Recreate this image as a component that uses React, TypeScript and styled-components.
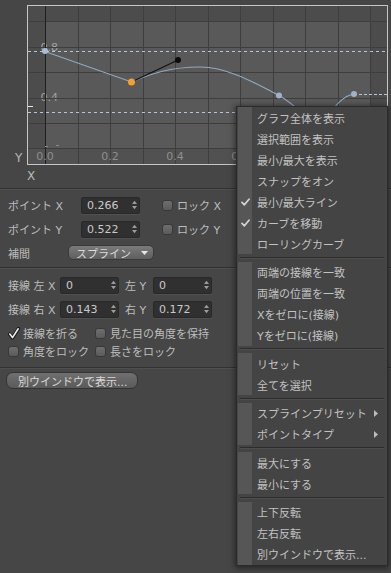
import React from 'react';
import styled, { createGlobalStyle } from 'styled-components';

const UI_FONT = `"DejaVu Sans", "Noto Sans CJK JP", sans-serif`;

const GlobalStyle = createGlobalStyle`
  body {
    margin: 0;
    background: #464646;
  }
`;

const Page = styled.div`
  position: relative;
  width: 391px;
  height: 573px;
  overflow: hidden;
  background: #464646;
  color: #bdbdbd;
  font-family: ${UI_FONT};
  font-size: 11px;
`;

const GraphRow = styled.div`
  display: flex;
  align-items: flex-end;
  padding-top: 5px;
`;

const AxisName = styled.div<{ $pad: number }>`
  flex: none;
  padding-left: ${p => p.$pad}px;
  font-size: 12px;
  line-height: 12px;
  color: #b8b8b8;
`;

const YSlot = styled(AxisName)`
  width: 27px;
  box-sizing: border-box;
  margin-bottom: 1px;
`;

const XRow = styled.div`
  height: 23px;
  box-sizing: border-box;
  padding-top: 5px;
`;

const GraphFrame = styled.div`
  flex: none;
  width: 361px;
  height: 160px;
  box-sizing: border-box;
  border: 1px solid #c6c6c6;
  background: #4c4c4c;

  svg {
    display: block;
  }
`;

const Divider = styled.div`
  height: 0;
  border-top: 1px solid #323232;
  border-bottom: 1px solid #4f4f4f;
`;

const Section = styled.div<{ $top: number; $bottom: number }>`
  padding: ${p => p.$top}px 0 ${p => p.$bottom}px 8px;
`;

const Row = styled.div<{ $h: number; $mt?: number }>`
  display: flex;
  align-items: center;
  height: ${p => p.$h}px;
  margin-top: ${p => p.$mt ?? 0}px;
  white-space: nowrap;
`;

const Label = styled.span<{ $w?: number; $ml?: number }>`
  flex: none;
  width: ${p => (p.$w ? `${p.$w}px` : 'auto')};
  margin-left: ${p => p.$ml ?? 0}px;
`;

const Field = styled.div`
  flex: none;
  width: 59px;
  height: 17px;
  box-sizing: border-box;
  display: flex;
  align-items: center;
  justify-content: space-between;
  padding: 0 2px 0 5px;
  background: #303030;
  border: 1px solid #282828;
  border-radius: 2px;
  box-shadow: 0 1px 0 #515151;
  color: #cacaca;
`;

const Box = styled.span<{ $ml?: number }>`
  flex: none;
  width: 11px;
  height: 11px;
  box-sizing: border-box;
  margin-left: ${p => p.$ml ?? 0}px;
  margin-right: 4px;
  border: 1px solid #383838;
  border-radius: 3px;
  background: linear-gradient(#6e6e6e, #5b5b5b);
`;

const CheckCell = styled.span<{ $w?: number }>`
  flex: none;
  display: flex;
  align-items: center;
  width: ${p => (p.$w ? `${p.$w}px` : 'auto')};
`;

const Dropdown = styled.div`
  flex: none;
  width: 86px;
  height: 15px;
  box-sizing: border-box;
  display: flex;
  align-items: center;
  justify-content: space-between;
  padding: 0 5px 0 7px;
  border: 1px solid #3a3a3a;
  border-radius: 5px;
  background: linear-gradient(#7a7a7a, #5f5f5f);
  color: #dadada;
`;

const WindowButton = styled.div`
  width: 132px;
  height: 17px;
  box-sizing: border-box;
  margin-left: -2px;
  padding-left: 11px;
  display: flex;
  align-items: center;
  border: 1px solid #333333;
  border-radius: 7px;
  background: linear-gradient(#707070, #5a5a5a);
  color: #d8d8d8;
  white-space: nowrap;
`;

const Menu = styled.div`
  position: absolute;
  left: 236px;
  top: 106px;
  width: 152px;
  box-sizing: border-box;
  padding: 0 2px 0 1px;
  border: 1px solid #2b2b2b;
  background: #444444;
  box-shadow: 0 1px 6px 1px rgba(0, 0, 0, 0.5);
  color: #c2c2c2;
`;

const MenuItem = styled.div`
  display: flex;
  align-items: stretch;
  height: 21px;
  white-space: nowrap;
`;

const Gutter = styled.span`
  flex: none;
  width: 14px;
  display: flex;
  align-items: center;
  justify-content: center;
  background: #565656;
`;

const ItemText = styled.span`
  flex: 1;
  display: flex;
  align-items: center;
  padding-left: 5px;
`;

const SubArrow = styled.span`
  display: flex;
  align-items: center;
  padding-right: 7px;
`;

const MenuSeparator = styled.div`
  height: 7.5px;
  display: flex;
  align-items: center;
  padding: 0 1px 0 2px;

  &::after {
    content: '';
    flex: 1;
    height: 0;
    border-top: 1px solid #2d2d2d;
    border-bottom: 1px solid #4e4e4e;
  }
`;

const Spinner = () => (
  <svg width="5" height="10" viewBox="0 0 5 10">
    <path d="M0 4 L2.5 0.8 L5 4 Z M0 6 L2.5 9.2 L5 6 Z" fill="#9c9c9c" />
  </svg>
);

const NumberField = ({ value }: { value: string }) => (
  <Field>
    <span>{value}</span>
    <Spinner />
  </Field>
);

const BoldCheck = () => (
  <svg width="12" height="13" viewBox="0 0 12 13" style={{ marginRight: 3, flex: 'none' }}>
    <path d="M1.5 7 L4.5 11 L10.5 1.5" fill="none" stroke="#1c1c1c" strokeWidth="3.4" strokeLinecap="round" strokeLinejoin="round" />
    <path d="M1.8 7 L4.5 10.6 L10.2 1.8" fill="none" stroke="#ececec" strokeWidth="1.6" strokeLinecap="round" strokeLinejoin="round" />
  </svg>
);

const MenuCheck = () => (
  <svg width="9" height="8" viewBox="0 0 9 8">
    <path d="M1 4.4 L3.4 6.8 L8 1.2" fill="none" stroke="#d2d2d2" strokeWidth="1.8" strokeLinecap="round" strokeLinejoin="round" />
  </svg>
);

const DownTriangle = () => (
  <svg width="7" height="4" viewBox="0 0 7 4">
    <path d="M0 0 L7 0 L3.5 4 Z" fill="#e6e6e6" />
  </svg>
);

const RightTriangle = () => (
  <svg width="4" height="7" viewBox="0 0 4 7">
    <path d="M0 0 L4 3.5 L0 7 Z" fill="#bcbcbc" />
  </svg>
);

const gridX = [45, 77.5, 110, 142.5, 175, 207.5, 240, 272.5, 305, 337.5, 370];
const gridY = [21, 46.5, 72, 97.5, 123, 148];
// labels further right sit under the context menu
const xLabels = ['0.0', '0.2', '0.4', '0.6'];

const Graph = () => (
  <GraphFrame>
    <svg width="359" height="158" viewBox="28 6 359 158" fontFamily={UI_FONT} fontSize="11">
      <rect x="45" y="21" width="325" height="127" fill="#595959" />
      <text x="40.5" y="50.5" fill="#a3a3a3">0.8</text>
      <text x="40.5" y="101" fill="#a3a3a3">0.4</text>
      <rect x="28" y="148" width="359" height="16" fill="#515151" />
      {gridX.map(x => (
        <line key={x} x1={Math.round(x) + 0.5} x2={Math.round(x) + 0.5} y1="6" y2="164" stroke="#3e3e3e" />
      ))}
      {gridY.map(y => (
        <line key={y} y1={Math.round(y) + 0.5} y2={Math.round(y) + 0.5} x1="28" x2="387" stroke="#3e3e3e" />
      ))}
      <line x1="45.5" x2="45.5" y1="6" y2="164" stroke="#1e1e1e" />
      <line x1="45" x2="48" y1="146.5" y2="146.5" stroke="#8a8a8a" />
      <line x1="56" x2="59" y1="145.5" y2="145.5" stroke="#8a8a8a" />
      {xLabels.map((t, i) => (
        <text key={t} x={45 + i * 65} y="159.5" fill="#8e8e8e" textAnchor="middle">
          {t}
        </text>
      ))}
      <line x1="28" x2="387" y1="51.5" y2="51.5" stroke="#b6c6d6" strokeDasharray="3 3" />
      <line x1="28" x2="387" y1="112.5" y2="112.5" stroke="#b6c6d6" strokeDasharray="3 3" />
      <line x1="28" x2="33" y1="106.5" y2="106.5" stroke="#e6e6e6" />
      <path
        d="M45 51.5 L131.5 82 C150 74 170 67 200 67 C225 67 250 80 279 95.5 C300 107 310 125 318 125 C326 125 335 97 354 94"
        fill="none"
        stroke="#92a9c0"
        strokeWidth="1.1"
      />
      <line x1="354" x2="387" y1="94.5" y2="94.5" stroke="#b6c6d6" strokeDasharray="3 2" />
      <line x1="131.5" y1="82" x2="178" y2="60" stroke="#111" strokeWidth="1.2" />
      <circle cx="45" cy="51" r="3" fill="#a8bed4" />
      <circle cx="279" cy="95.5" r="3" fill="#9cb3ca" />
      <circle cx="354" cy="94" r="3" fill="#9cb3ca" />
      <circle cx="131.5" cy="82" r="3.5" fill="#f2a22c" />
      <circle cx="178" cy="60" r="3" fill="#0c0c0c" />
    </svg>
  </GraphFrame>
);

type Entry = { label: string; checked?: boolean; submenu?: boolean };

const menuGroups: Entry[][] = [
  [
    { label: 'グラフ全体を表示' },
    { label: '選択範囲を表示' },
    { label: '最小/最大を表示' },
    { label: 'スナップをオン' },
    { label: '最小/最大ライン', checked: true },
    { label: 'カーブを移動', checked: true },
    { label: 'ローリングカーブ' },
  ],
  [
    { label: '両端の接線を一致' },
    { label: '両端の位置を一致' },
    { label: 'Xをゼロに(接線)' },
    { label: 'Yをゼロに(接線)' },
  ],
  [{ label: 'リセット' }, { label: '全てを選択' }],
  [
    { label: 'スプラインプリセット', submenu: true },
    { label: 'ポイントタイプ', submenu: true },
  ],
  [{ label: '最大にする' }, { label: '最小にする' }],
  [{ label: '上下反転' }, { label: '左右反転' }, { label: '別ウインドウで表示...' }],
];

const ContextMenu = () => (
  <Menu>
    {menuGroups.map((group, gi) => (
      <React.Fragment key={gi}>
        {gi > 0 && <MenuSeparator />}
        {group.map(item => (
          <MenuItem key={item.label}>
            <Gutter>{item.checked && <MenuCheck />}</Gutter>
            <ItemText>{item.label}</ItemText>
            {item.submenu && (
              <SubArrow>
                <RightTriangle />
              </SubArrow>
            )}
          </MenuItem>
        ))}
      </React.Fragment>
    ))}
  </Menu>
);

const App: React.FC = () => {
  return (
    <Page>
      <GlobalStyle />
      <GraphRow>
        <YSlot $pad={15}>Y</YSlot>
        <Graph />
      </GraphRow>
      <XRow>
        <AxisName $pad={27}>X</AxisName>
      </XRow>
      <Divider />

      <Section $top={3} $bottom={3}>
        <Row $h={24}>
          <Label $w={73}>ポイント X</Label>
          <NumberField value="0.266" />
          <Box $ml={22} />
          <Label>ロック X</Label>
        </Row>
        <Row $h={24}>
          <Label $w={73}>ポイント Y</Label>
          <NumberField value="0.522" />
          <Box $ml={22} />
          <Label>ロック Y</Label>
        </Row>
        <Row $h={23}>
          <Label $w={60}>補間</Label>
          <Dropdown>
            <span>スプライン</span>
            <DownTriangle />
          </Dropdown>
        </Row>
      </Section>
      <Divider />

      <Section $top={4} $bottom={7}>
        <Row $h={24}>
          <Label $w={52}>接線 左 X</Label>
          <NumberField value="0" />
          <Label $w={28} $ml={6}>左 Y</Label>
          <NumberField value="0" />
        </Row>
        <Row $h={24}>
          <Label $w={52}>接線 右 X</Label>
          <NumberField value="0.143" />
          <Label $w={28} $ml={6}>右 Y</Label>
          <NumberField value="0.172" />
        </Row>
        <Row $h={18} $mt={3}>
          <CheckCell $w={87}>
            <BoldCheck />
            接線を折る
          </CheckCell>
          <CheckCell>
            <Box />
            見た目の角度を保持
          </CheckCell>
        </Row>
        <Row $h={18}>
          <CheckCell $w={87}>
            <Box />
            角度をロック
          </CheckCell>
          <CheckCell>
            <Box />
            長さをロック
          </CheckCell>
        </Row>
      </Section>
      <Divider />

      <Section $top={3} $bottom={0}>
        <WindowButton>別ウインドウで表示...</WindowButton>
      </Section>

      <ContextMenu />
    </Page>
  );
};

export default App;
